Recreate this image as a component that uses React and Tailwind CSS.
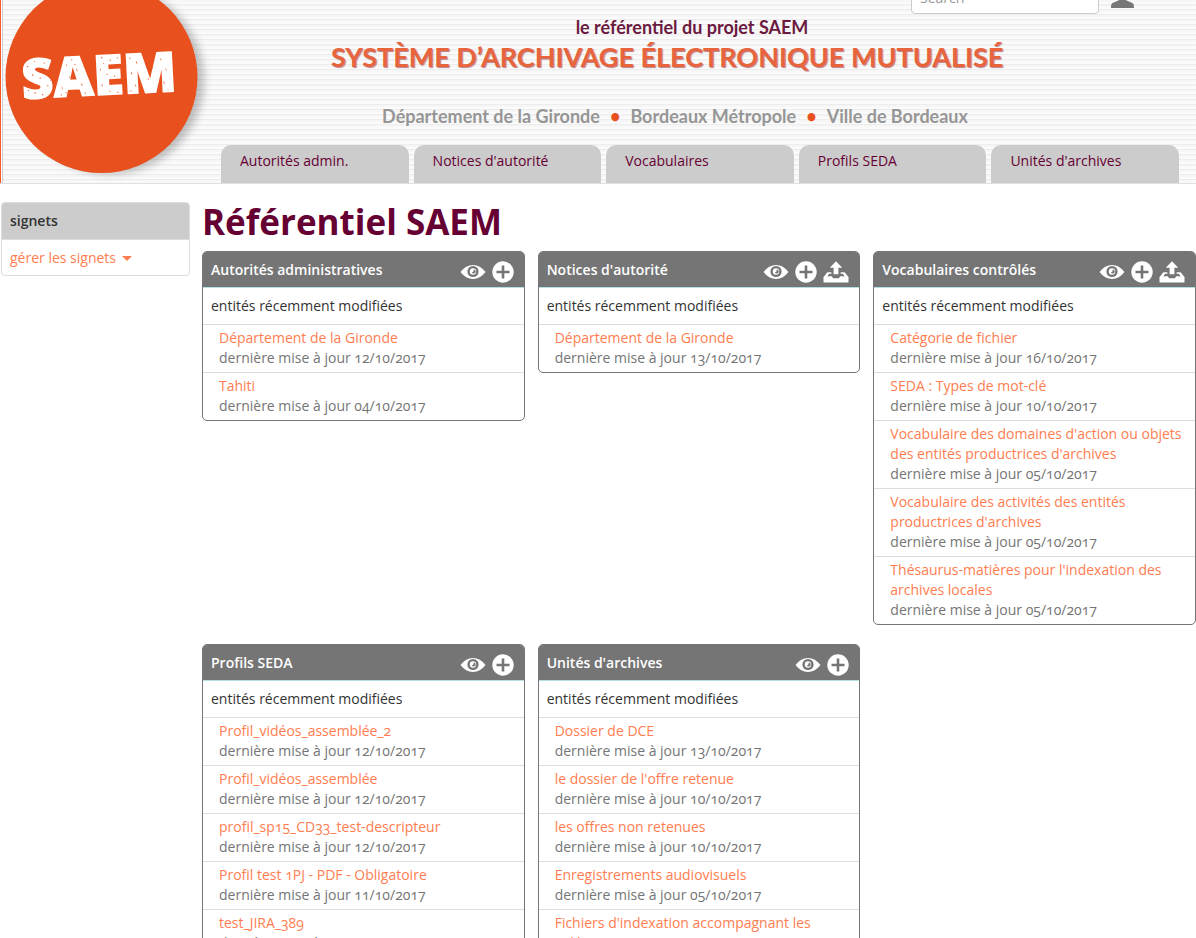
const tabs = [
  'Autorités admin.',
  "Notices d'autorité",
  'Vocabulaires',
  'Profils SEDA',
  "Unités d'archives",
];

const panels = [
  {
    title: 'Autorités administratives',
    items: [
      ['Département de la Gironde', '12/10/2017'],
      ['Tahiti', '04/10/2017'],
    ],
  },
  {
    title: "Notices d'autorité",
    upload: true,
    items: [['Département de la Gironde', '13/10/2017']],
  },
  {
    title: 'Vocabulaires contrôlés',
    upload: true,
    items: [
      ['Catégorie de fichier', '16/10/2017'],
      ['SEDA : Types de mot-clé', '10/10/2017'],
      ["Vocabulaire des domaines d'action ou objets des entités productrices d'archives", '05/10/2017'],
      ["Vocabulaire des activités des entités productrices d'archives", '05/10/2017'],
      ["Thésaurus-matières pour l'indexation des archives locales", '05/10/2017'],
    ],
  },
  {
    title: 'Profils SEDA',
    items: [
      ['Profil_vidéos_assemblée_2', '12/10/2017'],
      ['Profil_vidéos_assemblée', '12/10/2017'],
      ['profil_sp15_CD33_test-descripteur', '12/10/2017'],
      ['Profil test 1PJ - PDF - Obligatoire', '11/10/2017'],
      ['test_JIRA_389', '11/10/2017'],
    ],
  },
  {
    title: "Unités d'archives",
    items: [
      ['Dossier de DCE', '13/10/2017'],
      ["le dossier de l'offre retenue", '10/10/2017'],
      ['les offres non retenues', '10/10/2017'],
      ['Enregistrements audiovisuels', '05/10/2017'],
      ["Fichiers d'indexation accompagnant les vidéos", '05/10/2017'],
    ],
  },
];

function EyeIcon() {
  return (
    <svg viewBox="0 0 26 22" className="h-[22px] w-[26px]" aria-hidden="true">
      <path d="M0.5 11C4 6.300 8.200 4 13 4s9 2.300 12.500 7C22 15.700 17.800 18 13 18S4 15.700 0.500 11z" fill="#fff" />
      <circle cx="13" cy="10.500" r="5.600" fill="#757575" />
      <circle cx="13" cy="10.500" r="3.200" fill="#fff" />
      <path d="M13.600 8.600a2 2 0 1 1-1.800 2.600c1.200.3 2.200-.8 1.800-2.600z" fill="#757575" />
    </svg>
  );
}

function PlusIcon() {
  return (
    <svg viewBox="0 0 22 22" className="size-[22px]" aria-hidden="true">
      <circle cx="11" cy="11" r="10.700" fill="#fff" />
      <path d="M11 4.500v13M4.500 11h13" stroke="#757575" strokeWidth="2.600" fill="none" />
    </svg>
  );
}

function UploadIcon() {
  return (
    <svg viewBox="0 0 26 22" className="h-[22px] w-[26px]" aria-hidden="true">
      <path d="M13 0.300l6.200 6.500h-3.800v6.400h-4.800V6.800H6.800z" fill="#fff" />
      <path
        d="M4.400 11.200h4v1.500H6.300L4.200 15.200h4.600l1.300 2h5.800l1.300-2h4.600l-2.100-2.500h-2.100v-1.500h4l3.900 4.800v5.500H0.500v-5.500z"
        fill="#fff"
      />
    </svg>
  );
}

function Logo() {
  return (
    <svg viewBox="0 0 218 183" className="h-[183px] w-[218px] shrink-0" role="img" aria-label="SAEM">
      <defs>
        <filter id="logoShadow" x="-20%" y="-20%" width="140%" height="140%">
          <feGaussianBlur stdDeviation="4" />
        </filter>
      </defs>
      <circle cx="107" cy="80" r="94" fill="#000" opacity="0.240" filter="url(#logoShadow)" />
      <circle cx="98.500" cy="77" r="96" fill="#e8501e" />
      <g transform="rotate(-3 96 75)">
        <text
          x="96"
          y="95"
          textAnchor="middle"
          fill="#fff"
          stroke="#fff"
          strokeWidth="1.500"
          className="font-['Open_Sans',sans-serif] text-[55px] font-extrabold"
        >
          SAEM
        </text>
        <g fill="#e8501e">
          <path d="M24 62l2 .6-.8 1.300zM32 57.500l1.100.8-.9.900zM41 60l1.600-.4-.7 1.500zM29 70.500l2 1.400-1.700.3zM36 75l1.600-.8.200 1.500zM44 82l1.200 1.600-1.500-.2zM30 90l2-1.600-.5 1.900zM24 86l1.500.6-1.100 1zM38 91l2 .8-1.700.7zM47 77l.9 1.200-1.200-.2z" />
          <path d="M64 62l.9 3-1.200-1.400zM69 57.500l1.600.8-1.300.7zM66 75l1.700.7-1.500.6zM58.500 84l.5 4-.9-1.800zM62 90l1.200 2-1.500-.8zM74 67l1 3.600-1.400-1.500zM78 82l1.500 3-1.700-1zM81 91l1 2.600-1.300-1zM57 92l1.200 1.300-1.400.1zM72 62.500l1.500 1-1.500.2z" />
          <path d="M99 57l2 1.200-1.900.1zM107 61l2-1-.9 1.500zM97.500 68l.8 3-1.200-1.300zM103 75l1.900-1.100-.6 1.500zM111 76l1.700 1.100-1.800.2zM98.500 84l.7 3-1.300-1.300zM105 92l2-.9-.8 1.500zM113 94l1.200-1.700.3 1.500zM101 63l1.100 1-1.200.2zM115 58l.9 1.700-1.300-.6z" />
          <path d="M127 59l1.900 1-1.800.3zM134 63l1 3-1.600-1.300zM128.500 73l.7 4-1.200-1.800zM132 86l.8 3-1.300-1.400zM126.500 92l1.700.7-1.500.7zM144 82l1.500-1.700v1.900zM149 70l1.700.9-1.600.4zM158.500 61l.7 3-1.200-1.200zM163 72l1 2-1.500-.8zM160.500 84l.7 4-1.200-1.700zM164 93l1.100 1-1.200.2zM156.500 90l.7 3-1.200-1.100z" />
        </g>
      </g>
    </svg>
  );
}

function Panel({ title, upload, items }) {
  return (
    <section className="overflow-hidden rounded-[5px] border border-[#757575] bg-white">
      <header className="flex h-9 items-start justify-between border-b border-[#b5dfe3] bg-[#757575] pr-[10px] pl-2 text-white">
        <h2 className="pt-2 font-semibold">{title}</h2>
        <div className="flex gap-[6px] pt-[9px]">
          <a href="#voir" aria-label={`Voir : ${title}`}>
            <EyeIcon />
          </a>
          <a href="#ajouter" aria-label={`Ajouter : ${title}`}>
            <PlusIcon />
          </a>
          {upload && (
            <a href="#importer" aria-label={`Importer : ${title}`}>
              <UploadIcon />
            </a>
          )}
        </div>
      </header>
      <h3 className="px-2 py-2 text-[#333]">entités récemment modifiées</h3>
      <ul>
        {items.map(([name, date]) => (
          <li key={name} className="border-t border-[#ddd] pt-[3px] pr-[3px] pb-1 pl-4">
            <a href="#entite" className="block text-[#ff7d50]">
              {name}
            </a>
            <p className="text-[#757575]">dernière mise à jour {date}</p>
          </li>
        ))}
      </ul>
    </section>
  );
}

export default function App() {
  return (
    <div className="h-screen overflow-hidden bg-white font-['Open_Sans','Noto_Sans',sans-serif] text-[14px]/[20px] text-[#333] oldstyle-nums">
      <header className="flex overflow-hidden border-b border-[#e0e0e0] bg-[repeating-linear-gradient(to_bottom,#f6f6f6_0px,#f7f7f7_2px,#fbfbfb_2px,#fbfbfb_4px,#ededed_4px,#ededed_5px)]">
        <div className="flex border-l border-[#f8571f]">
          <div className="w-[2px] border-r border-[#ccc] bg-white" />
        </div>
        <Logo />
        <div className="flex min-w-0 flex-1 flex-col pr-[17px]">
          <div className="-mt-5 flex items-center justify-end gap-3 pr-[45px]">
            <input
              type="search"
              aria-label="Search"
              placeholder="Search"
              className="h-[34px] w-[188px] rounded-[4px] border border-[#ccc] bg-white px-2 placeholder:text-[#999]"
            />
            <button type="button" aria-label="Compte" className="block h-[22px]">
              <svg viewBox="0 0 23 22" className="h-[22px] w-[23px]" aria-hidden="true">
                <path d="M11.500 0c3 0 5 2.200 5 5.500 0 2.600-.9 5-2.500 6.300v1.700c1.500 1.300 5 2.300 7.400 3.600 1.200.7 1.600 1.900 1.600 4.900H0c0-3 .4-4.200 1.600-4.900C4 15.800 7.500 14.800 9 13.500v-1.700C7.400 10.500 6.500 8.100 6.500 5.500c0-3.300 2-5.500 5-5.500z" fill="#777" />
              </svg>
            </button>
          </div>
          <div className="ml-[110px] w-[672px] text-center font-['Lato',sans-serif] font-bold whitespace-nowrap">
            <p className="mt-[3px] pl-[50px] text-[18px]/[20px] text-[#6b1a40]">le référentiel du projet SAEM</p>
            <p className="mt-1 text-[27px]/[32px] text-[#e8643c] [text-shadow:1px_1px_1px_#8c2f4599]">
              SYSTÈME D’ARCHIVAGE ÉLECTRONIQUE MUTUALISÉ
            </p>
            <p className="mt-[33px] flex justify-center gap-[10px] pl-4 text-[18px]/[20px] text-[#969696]">
              <span>Département de la Gironde</span>
              <span className="text-[#e8501e]">•</span>
              <span>Bordeaux Métropole</span>
              <span className="text-[#e8501e]">•</span>
              <span>Ville de Bordeaux</span>
            </p>
          </div>
          <nav className="mt-auto grid grid-cols-5 gap-[5px]">
            {tabs.map((tab) => (
              <a key={tab} href="#rubrique" className="h-[38px] rounded-t-[10px] bg-[#ccc] px-[19px] pt-[6px] text-[#603]">
                {tab}
              </a>
            ))}
          </nav>
        </div>
      </header>

      <div className="flex items-start gap-3 pt-[18px] pl-px">
        <aside className="w-[189px] shrink-0 overflow-hidden rounded-[4px] border border-[#ddd]">
          <h2 className="border-b border-[#ddd] bg-[#ccc] px-2 py-2 font-semibold">signets</h2>
          <button type="button" className="flex items-center gap-[6px] px-2 pt-2 pb-[7px] text-[#ff7d50]">
            gérer les signets
            <svg viewBox="0 0 10 5" className="mt-px h-[5px] w-[10px]" aria-hidden="true">
              <path d="M0 0h10L5 5z" fill="currentColor" />
            </svg>
          </button>
        </aside>
        <main className="min-w-0 flex-1">
          <h1 className="text-[35px]/[40px] font-bold text-[#603]">Référentiel SAEM</h1>
          <div className="mt-[9px] grid grid-cols-3 items-start gap-x-[13px] gap-y-[19px]">
            {panels.map((panel) => (
              <Panel key={panel.title} {...panel} />
            ))}
          </div>
        </main>
      </div>
    </div>
  );
}
